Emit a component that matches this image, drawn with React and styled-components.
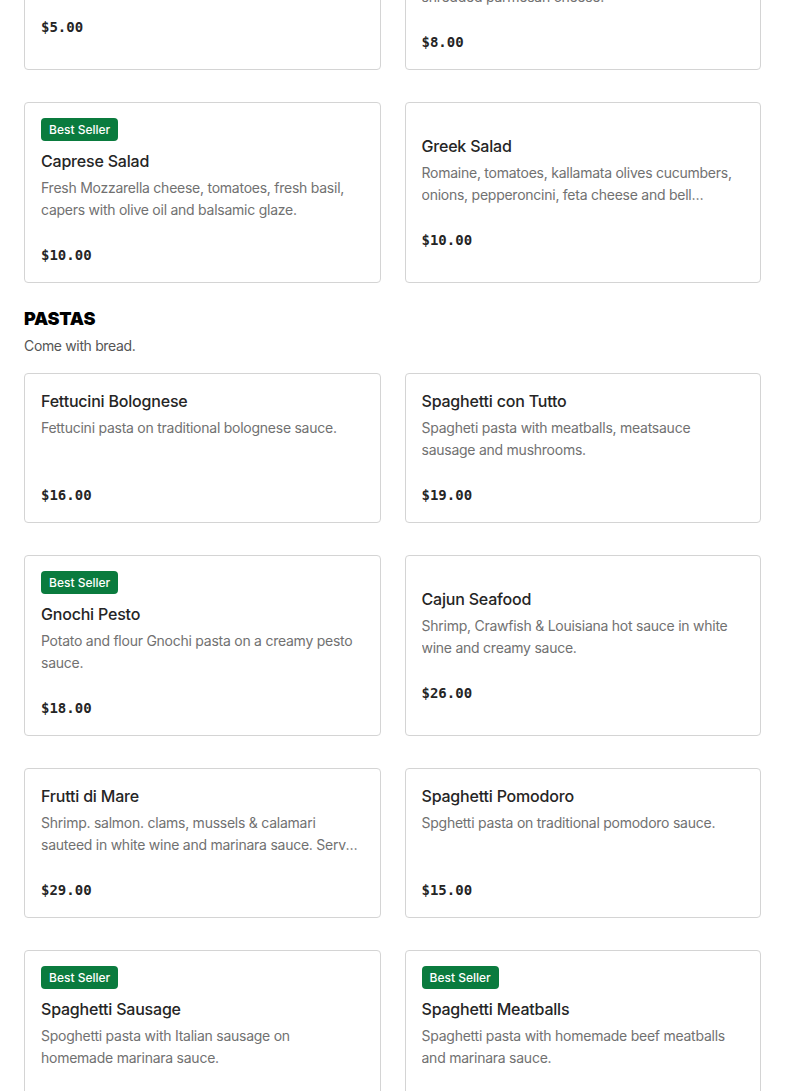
import React from 'react';
import styled, { createGlobalStyle } from 'styled-components';

const GlobalStyle = createGlobalStyle`
	html, body {
		margin: 0;
		padding: 0;
		background: #ffffff;
	}
	body {
		font-family: Inter, "Noto Sans", sans-serif;
		color: #252525;
	}
`;

// page is shown scrolled part way down the menu
const Page = styled.main`
	padding: 0 24px 40px;
	margin-top: -111px;
`;

const Section = styled.section`
	& + & {
		margin-top: 24px;
	}
`;

const SectionTitle = styled.h2`
	margin: 0;
	font-size: 18px;
	line-height: 24px;
	font-weight: 900;
	letter-spacing: -0.2px;
	color: #000;
`;

const SectionNote = styled.p`
	margin: 4px 0 16px;
	font-size: 14px;
	line-height: 22px;
	letter-spacing: -0.35px;
	color: #555;
`;

const Grid = styled.div`
	display: grid;
	grid-template-columns: 1fr 1fr;
	column-gap: 24px;
	row-gap: 32px;
`;

const Card = styled.div`
	display: flex;
	flex-direction: column;
	justify-content: center;
	align-items: flex-start;
	padding: 15px 16px 17px;
	border: 1px solid #d4d4d4;
	border-radius: 4px;
	background: #fff;
`;

const Badge = styled.span`
	display: inline-block;
	height: 23px;
	line-height: 23px;
	padding: 0 8px;
	margin-bottom: 8px;
	border-radius: 4px;
	background: #0a7b3e;
	color: #fff;
	font-size: 12px;
	font-weight: 500;
`;

const Name = styled.h3`
	margin: 0;
	font-size: 16px;
	line-height: 24px;
	font-weight: 500;
	letter-spacing: -0.2px;
	color: #252525;
`;

const Desc = styled.p`
	margin: 4px 0 0;
	height: 44px;
	font-size: 14px;
	line-height: 22px;
	letter-spacing: -0.25px;
	color: #717171;
	overflow: hidden;
	display: -webkit-box;
	-webkit-line-clamp: 2;
	-webkit-box-orient: vertical;
`;

const Price = styled.span`
	margin-top: 24px;
	font-family: "DejaVu Sans Mono", "Liberation Mono", monospace;
	font-size: 14px;
	line-height: 20px;
	font-weight: 700;
	color: #252525;
`;

const menu = [
	{
		title: null,
		items: [
			{ name: 'House Salad', desc: 'Mixed greens, tomatoes, cucumbers and red onions.', price: '$5.00' },
			{ best: true, name: 'Caesar Salad', desc: 'Romaine lettuce, croutons, caesar dressing and shredded parmesan cheese.', price: '$8.00' },
			{ best: true, name: 'Caprese Salad', desc: 'Fresh Mozzarella cheese, tomatoes, fresh basil, capers with olive oil and balsamic glaze.', price: '$10.00' },
			{ name: 'Greek Salad', desc: 'Romaine, tomatoes, kallamata olives cucumbers, onions, pepperoncini, feta cheese and bell peppers.', price: '$10.00' },
		],
	},
	{
		title: 'PASTAS',
		note: 'Come with bread.',
		items: [
			{ name: 'Fettucini Bolognese', desc: 'Fettucini pasta on traditional bolognese sauce.', price: '$16.00' },
			{ name: 'Spaghetti con Tutto', desc: 'Spagheti pasta with meatballs, meatsauce sausage and mushrooms.', price: '$19.00' },
			{ best: true, name: 'Gnochi Pesto', desc: 'Potato and flour Gnochi pasta on a creamy pesto sauce.', price: '$18.00' },
			{ name: 'Cajun Seafood', desc: 'Shrimp, Crawfish & Louisiana hot sauce in white wine and creamy sauce.', price: '$26.00' },
			{ name: 'Frutti di Mare', desc: 'Shrimp. salmon. clams, mussels & calamari sauteed in white wine and marinara sauce. Served with garlic bread.', price: '$29.00' },
			{ name: 'Spaghetti Pomodoro', desc: 'Spghetti pasta on traditional pomodoro sauce.', price: '$15.00' },
			{ best: true, name: 'Spaghetti Sausage', desc: 'Spoghetti pasta with Italian sausage on homemade marinara sauce.', price: '$17.00' },
			{ best: true, name: 'Spaghetti Meatballs', desc: 'Spaghetti pasta with homemade beef meatballs and marinara sauce.', price: '$17.00' },
		],
	},
];

const MenuCard = ({ item }) => (
	<Card>
		{item.best && <Badge>Best Seller</Badge>}
		<Name>{item.name}</Name>
		<Desc>{item.desc}</Desc>
		<Price>{item.price}</Price>
	</Card>
);

const App = () => {
	return (
		<>
			<GlobalStyle />
			<Page>
				{menu.map((section, i) => (
					<Section key={i}>
						{section.title && <SectionTitle>{section.title}</SectionTitle>}
						{section.note && <SectionNote>{section.note}</SectionNote>}
						<Grid>
							{section.items.map((item) => (
								<MenuCard key={item.name} item={item} />
							))}
						</Grid>
					</Section>
				))}
			</Page>
		</>
	);
};

export default App;
